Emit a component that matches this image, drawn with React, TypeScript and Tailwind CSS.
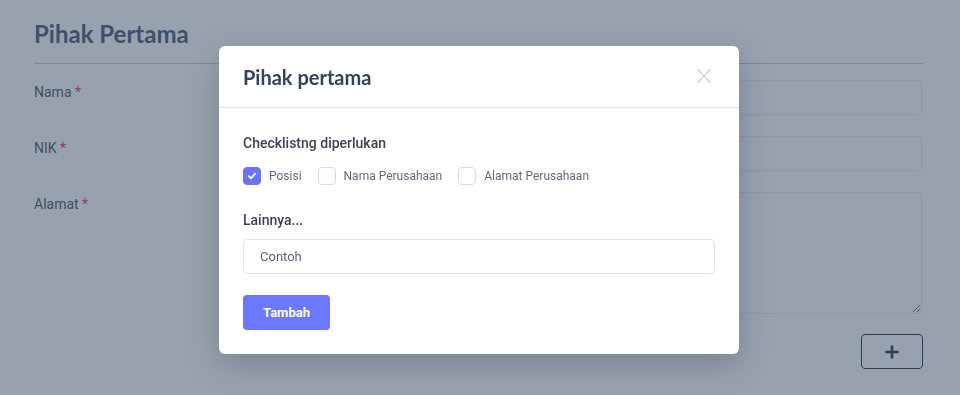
import { useState } from 'react';

interface CheckItem {
  id: string;
  label: string;
}

const CHECK_ITEMS: CheckItem[] = [
  { id: 'posisi', label: 'Posisi' },
  { id: 'nama', label: 'Nama Perusahaan' },
  { id: 'alamat', label: 'Alamat Perusahaan' },
];

function FormPage() {
  return (
    <div className="min-h-[395px] bg-white pl-[34px] pr-[36px] pt-[18px] font-['Roboto',sans-serif]">
      <h1 className="font-['Lato',sans-serif] text-[24px] font-bold leading-[32px] text-[#4a5a7c]">Pihak Pertama</h1>
      <div className="mt-[13px] border-b border-[#c3cee3]" />

      <div className="mt-[16px] flex flex-col gap-[21px] pr-[2px]">
        {/* Nama */}
        <div className="flex">
          <label className="w-[230px] pt-[1px] text-[14px] leading-[22px] text-[#4b5566]">
            Nama <span className="text-[#e53e3e]">*</span>
          </label>
          <input className="h-[35px] flex-1 rounded-[4px] border border-[#e2e8f4] px-3 text-[13px]" />
        </div>

        {/* NIK */}
        <div className="flex">
          <label className="w-[230px] pt-[1px] text-[14px] leading-[22px] text-[#4b5566]">
            NIK <span className="text-[#e53e3e]">*</span>
          </label>
          <input className="h-[35px] flex-1 rounded-[4px] border border-[#e2e8f4] px-3 text-[13px]" />
        </div>

        {/* Alamat */}
        <div className="flex">
          <label className="w-[230px] pt-[1px] text-[14px] leading-[22px] text-[#4b5566]">
            Alamat <span className="text-[#e53e3e]">*</span>
          </label>
          <textarea className="h-[122px] flex-1 resize-y rounded-[4px] border border-[#e2e8f4] px-3 text-[13px]" />
        </div>
      </div>

      <div className="mt-[20px] flex justify-end pr-[1px]">
        <button className="flex h-[35px] w-[62px] items-center justify-center rounded-[4px] border border-[#2a3756] text-[#2a3756]">
          <svg width="14" height="14" viewBox="0 0 14 14">
            <path d="M7 1.5v11M1.5 7h11" stroke="currentColor" strokeWidth="2.6" strokeLinecap="round" />
          </svg>
        </button>
      </div>
    </div>
  );
}

function Modal() {
  const [checked, setChecked] = useState<string[]>(['posisi']);

  const toggle = (id: string) => {
    setChecked(prev => (prev.includes(id) ? prev.filter(c => c !== id) : [...prev, id]));
  };

  return (
    <div className="fixed inset-0 bg-[#31455d]/50">
      <div className="absolute left-[219px] top-[46px] w-[520px] rounded-[6px] bg-white font-['Roboto',sans-serif] shadow-[0_10px_30px_rgba(30,41,59,0.25)]">
        {/* Header */}
        <div className="flex h-[62px] items-center justify-between border-b border-[#dde2ee] px-[24px]">
          <h2 className="pt-[1px] font-['Lato',sans-serif] text-[20px] font-bold text-[#33425d]">Pihak pertama</h2>
          <button className="mr-[3px] mb-[2px] text-[#c9cdd3]">
            <svg width="16" height="16" viewBox="0 0 16 16">
              <path d="M1.5 1.5l13 13M14.5 1.5l-13 13" stroke="currentColor" strokeWidth="1.3" />
            </svg>
          </button>
        </div>

        {/* Body */}
        <div className="px-[24px] pt-[26px] pb-[24px]">
          <p className="text-[14px] font-medium leading-[18px] text-[#3b4455]">Checklistng diperlukan</p>

          <div className="mt-[15px] flex items-center gap-[16px]">
            {CHECK_ITEMS.map(item => {
              const on = checked.includes(item.id);
              return (
                <label key={item.id} className="flex cursor-pointer items-center gap-[8px]" onClick={() => toggle(item.id)}>
                  <span
                    className={`flex h-[18px] w-[18px] items-center justify-center rounded-[4px] border ${
                      on ? 'border-[#6b74f5] bg-[#6b74f5]' : 'border-[#d6dbe6] bg-white'
                    }`}
                  >
                    {on && (
                      <svg width="10" height="10" viewBox="0 0 10 10">
                        <path d="M1.8 5.2l2.2 2.1 4.2-4.6" fill="none" stroke="white" strokeWidth="1.8" strokeLinecap="round" strokeLinejoin="round" />
                      </svg>
                    )}
                  </span>
                  <span className="text-[12px] leading-[18px] text-[#5e6a80]">{item.label}</span>
                </label>
              );
            })}
          </div>

          <p className="mt-[26px] text-[14px] font-medium leading-[18px] text-[#3b4455]">Lainnya...</p>

          <input
            placeholder="Contoh"
            className="mt-[10px] h-[35px] w-full rounded-[4px] border border-[#dde2ee] px-[16px] text-[13px] text-[#4a5468] placeholder:text-[#59627a] focus:outline-none"
          />

          <button className="mt-[21px] h-[35px] w-[87px] rounded-[4px] bg-[#6b78ff] text-[13px] font-bold text-white">
            Tambah
          </button>
        </div>
      </div>
    </div>
  );
}

export default function App() {
  return (
    <div className="relative h-[395px] w-full overflow-hidden">
      <FormPage />
      <Modal />
    </div>
  );
}
